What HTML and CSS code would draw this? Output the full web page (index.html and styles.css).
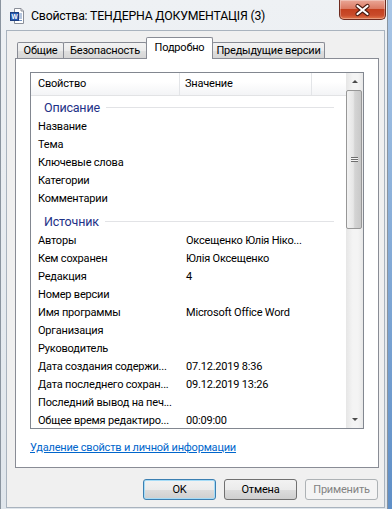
FILE: index.html
```html
<!DOCTYPE html>
<html lang="ru">
<head>
    <meta charset="UTF-8">
    <title>Свойства: ТЕНДЕРНА ДОКУМЕНТАЦІЯ (3)</title>
    <link rel="stylesheet" href="styles.css">
</head>
<body>
    <div class="window">
        <!-- Заголовок окна -->
        <div class="titlebar">
            <svg class="app-icon" width="14" height="16" viewBox="0 0 14 16">
                <path d="M4.5 0.5 H11 L13.5 3 V15.5 H4.5 Z" fill="#fff" stroke="#8a8f99"/>
                <path d="M11 0.5 V3 H13.5" fill="#e8e8e8" stroke="#8a8f99"/>
                <path d="M9 6 H12 M9 8 H12 M9 10 H12 M6 12.5 H12" stroke="#6c8ebf"/>
                <rect x="0.5" y="4.5" width="8" height="8" fill="#2b5fb4" stroke="#1c3f82"/>
                <text x="4.5" y="11" font-size="6.5" font-family="Liberation Sans, sans-serif" font-weight="bold" fill="#fff" text-anchor="middle">W</text>
            </svg>
            <span class="title">Свойства: ТЕНДЕРНА ДОКУМЕНТАЦІЯ (3)</span>
            <div class="close-btn">
                <svg width="47" height="20" viewBox="0 0 47 20">
                    <path d="M18.5 6 L28.5 14 M28.5 6 L18.5 14" stroke="#4a1a10" stroke-width="4.2" stroke-linecap="round"/>
                    <path d="M18.5 6 L28.5 14 M28.5 6 L18.5 14" stroke="#fff" stroke-width="2.2" stroke-linecap="round"/>
                </svg>
            </div>
        </div>

        <div class="client">
            <!-- Вкладки -->
            <div class="tabs">
                <div class="tab tab-general">Общие</div>
                <div class="tab tab-security">Безопасность</div>
                <div class="tab tab-details active">Подробно</div>
                <div class="tab tab-versions">Предыдущие версии</div>
            </div>

            <div class="panel">
                <div class="listbox">
                    <div class="list-main">
                        <div class="list-header">
                            <div class="col-prop">Свойство</div>
                            <div class="col-val">Значение</div>
                            <div class="col-fill"></div>
                        </div>

                        <div class="group"><span>Описание</span><i></i></div>
                        <div class="row"><span class="prop">Название</span><span class="val"></span></div>
                        <div class="row"><span class="prop">Тема</span><span class="val"></span></div>
                        <div class="row"><span class="prop">Ключевые слова</span><span class="val"></span></div>
                        <div class="row"><span class="prop">Категории</span><span class="val"></span></div>
                        <div class="row"><span class="prop">Комментарии</span><span class="val"></span></div>

                        <div class="group second"><span>Источник</span><i></i></div>
                        <div class="row"><span class="prop">Авторы</span><span class="val">Оксещенко Юлія Ніко...</span></div>
                        <div class="row"><span class="prop">Кем сохранен</span><span class="val">Юлія Оксещенко</span></div>
                        <div class="row"><span class="prop">Редакция</span><span class="val">4</span></div>
                        <div class="row"><span class="prop">Номер версии</span><span class="val"></span></div>
                        <div class="row"><span class="prop">Имя программы</span><span class="val">Microsoft Office Word</span></div>
                        <div class="row"><span class="prop">Организация</span><span class="val"></span></div>
                        <div class="row"><span class="prop">Руководитель</span><span class="val"></span></div>
                        <div class="row"><span class="prop">Дата создания содержи...</span><span class="val">07.12.2019 8:36</span></div>
                        <div class="row"><span class="prop">Дата последнего сохран...</span><span class="val">09.12.2019 13:26</span></div>
                        <div class="row"><span class="prop">Последний вывод на печ...</span><span class="val"></span></div>
                        <div class="row"><span class="prop">Общее время редактиро...</span><span class="val">00:09:00</span></div>
                    </div>

                    <div class="scrollbar">
                        <div class="sb-btn up"><span></span></div>
                        <div class="sb-track">
                            <div class="sb-thumb"><b></b></div>
                        </div>
                        <div class="sb-btn down"><span></span></div>
                    </div>
                </div>

                <a class="remove-link" href="#">Удаление свойств и личной информации</a>
            </div>

            <div class="buttons">
                <button class="btn default">OK</button>
                <button class="btn">Отмена</button>
                <button class="btn" disabled>Применить</button>
            </div>
        </div>
    </div>
</body>
</html>
```

FILE: styles.css
```css
body {
    margin: 0;
    width: 392px;
    height: 509px;
    overflow: hidden;
    background: linear-gradient(#a9c6e6, #5f8fc7);
    font-family: "Segoe UI", Roboto, sans-serif;
    font-size: 11px;
    letter-spacing: -0.2px;
    color: #000;
}
.window {
    width: 388px;
    height: 509px;
    box-sizing: border-box;
    border-left: 1px solid #8a949f;
    border-right: 1px solid #8a949f;
    background: linear-gradient(#eef1f4, #e0e6ec);
    display: flex;
    flex-direction: column;
}

/* заголовок */
.titlebar {
    height: 30px;
    flex: none;
    display: flex;
    align-items: flex-start;
    padding-left: 9px;
}
.app-icon {
    margin-top: 8px;
}
.title {
    margin: 9px 0 0 7px;
    font-size: 12.3px;
    line-height: 15px;
}
.close-btn {
    margin-left: auto;
    margin-right: 1px;
    width: 47px;
    height: 20px;
    box-sizing: border-box;
    border: 1px solid #6e2b1f;
    border-top: none;
    border-radius: 0 0 5px 5px;
    background: linear-gradient(#eaa797 0%, #db7a63 45%, #c4401f 50%, #c94b2b 80%, #e3784c 100%);
    box-shadow: inset 0 0 0 1px rgba(255, 255, 255, 0.3);
}
.close-btn svg {
    display: block;
    margin-left: -1px;
}

/* клиентская область */
.client {
    flex: 1;
    margin: 0 2px 1px 5px;
    border: 1px solid #a9b3be;
    background: #f0f0f0;
    padding: 6px 5px 0 8px;
}

.tabs {
    display: flex;
    align-items: flex-end;
    height: 21px;
    padding-left: 2px;
    position: relative;
    z-index: 1;
}
.tab {
    height: 16px;
    line-height: 15px;
    box-sizing: border-box;
    text-align: center;
    border: 1px solid #898c95;
    border-bottom: none;
    border-radius: 2px 2px 0 0;
    margin-right: -1px;
    background: linear-gradient(#f3f3f3, #ebebeb 50%, #e0e0e0 51%, #d6d6d6);
}
.tab-general { width: 47px; }
.tab-security { width: 84px; }
.tab-details { width: 67px; }
.tab-versions { width: 113px; }
.tab.active {
    height: 22px;
    line-height: 19px;
    margin-bottom: -1px;
    background: #fff;
    position: relative;
}

.panel {
    height: 410px;
    box-sizing: border-box;
    border: 1px solid #898c95;
    background: #fff;
    padding: 13px 14px 0 14px;
}

/* список свойств */
.listbox {
    height: 357px;
    box-sizing: border-box;
    border: 1px solid #828790;
    display: flex;
    overflow: hidden;
}
.list-main {
    flex: 1;
    overflow: hidden;
}
.list-header {
    display: flex;
    height: 22px;
    border-bottom: 1px solid #e2e3e5;
    background: linear-gradient(#fff, #fff 40%, #f3f4f6);
    line-height: 22px;
}
.col-prop {
    width: 149px;
    box-sizing: border-box;
    padding-left: 7px;
    border-right: 1px solid #e3e5e8;
}
.col-val {
    width: 132px;
    box-sizing: border-box;
    padding-left: 5px;
    border-right: 1px solid #e3e5e8;
}
.col-fill {
    flex: 1;
}

.group {
    display: flex;
    align-items: center;
    height: 22px;
    padding-left: 13px;
    color: #1e3287;
    font-size: 12.5px;
}
.group.second {
    margin-top: 2px;
}
.group i {
    flex: 1;
    height: 1px;
    margin: 1px 12px 0 6px;
    background: #e2e3e6;
}
.row {
    display: flex;
    height: 18px;
    line-height: 18px;
    white-space: nowrap;
}
.prop {
    width: 155px;
    box-sizing: border-box;
    padding-left: 7px;
}

/* полоса прокрутки */
.scrollbar {
    width: 17px;
    flex: none;
    display: flex;
    flex-direction: column;
    background: linear-gradient(to right, #e6e6e6, #f4f4f4 40%, #f4f4f4 70%, #e8e8e8);
}
.sb-btn {
    height: 17px;
    flex: none;
    display: flex;
    align-items: center;
    justify-content: center;
}
.sb-btn span {
    width: 0;
    height: 0;
    border-left: 3px solid transparent;
    border-right: 3px solid transparent;
}
.sb-btn.up span {
    border-bottom: 3px solid #4b4b4b;
}
.sb-btn.down span {
    border-top: 3px solid #4b4b4b;
}
.sb-track {
    flex: 1;
}
.sb-thumb {
    height: 139px;
    margin: 0 1px 0 0;
    box-sizing: border-box;
    border: 1px solid #979797;
    border-radius: 2px;
    background: linear-gradient(to right, #f2f2f2, #e6e6e6 45%, #d4d4d4 55%, #c8c8c8);
    display: flex;
    align-items: center;
    justify-content: center;
}
.sb-thumb b {
    width: 7px;
    height: 5px;
    background: repeating-linear-gradient(#6e6e6e 0, #6e6e6e 1px, #f4f4f4 1px, #f4f4f4 2px);
}

.remove-link {
    display: inline-block;
    margin-top: 11px;
    line-height: 15px;
    color: #0066cc;
    text-decoration: underline;
}

/* кнопки */
.buttons {
    display: flex;
    justify-content: flex-end;
    gap: 8px;
    margin: 11px 1px 0 0;
}
.btn {
    width: 73px;
    height: 21px;
    padding: 0;
    border: 1px solid #707070;
    border-radius: 3px;
    background: linear-gradient(#f2f2f2, #ebebeb 50%, #dddddd 51%, #cfcfcf);
    font: inherit;
    letter-spacing: inherit;
    color: #000;
}
.btn.default {
    border-color: #3c7fb1;
    box-shadow: inset 0 0 0 1px #a6dcf7;
}
.btn:disabled {
    border-color: #adb2b5;
    background: #f4f4f4;
    color: #838383;
}
```
